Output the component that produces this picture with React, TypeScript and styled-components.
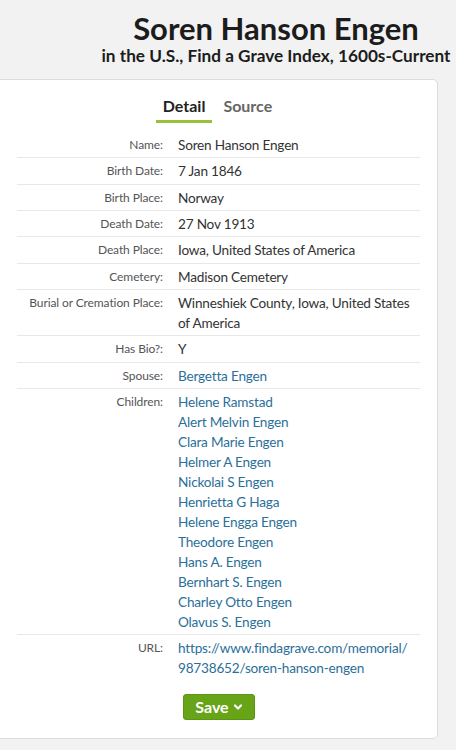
import styled, { createGlobalStyle } from "styled-components";

const GlobalStyle = createGlobalStyle`
  body{
    margin: 0;
    background: #f2f2f2;
    font-family: Lato, "Liberation Sans", sans-serif;
    color: #333;
  }
`
const Header = styled.header`
  padding: 11px 0 0 96px;
  text-align: center;
  > h1{
    margin: 0;
    font-size: 31px;
    line-height: 34px;
    font-weight: 700;
    color: #1c1c1c;
  }
  > h2{
    margin: 2px 0 0;
    font-size: 17.2px;
    line-height: 18px;
    font-weight: 700;
    color: #1c1c1c;
  }
`
const Card = styled.section`
  box-sizing: border-box;
  margin: 14px 0 0 -6px;
  width: 444px;
  background: white;
  border: 1px solid #dcdcdc;
  border-radius: 5px;
  padding: 0 17px 18px 22px;
`
const Tabs = styled.ul`
  list-style: none;
  margin: 0 0 9px;
  padding: 0;
  display: flex;
  justify-content: center;
  padding-right: 2px;
`
const Tab = styled.li<{ $active?: boolean }>`
  padding: 16px 7px 4px;
  margin: 0 2px;
  font-size: 16px;
  line-height: 20px;
  font-weight: 700;
  color: ${p => p.$active ? "#222" : "#666"};
  border-bottom: 3px solid ${p => p.$active ? "#97c13a" : "transparent"};
`
const Row = styled.div<{ $last?: boolean }>`
  display: grid;
  grid-template-columns: 146px 1fr;
  column-gap: 15px;
  padding: 3px 0 2.33px;
  border-bottom: ${p => p.$last ? "none" : "1px solid #e8e8e8"};
`
const Label = styled.div`
  text-align: right;
  font-size: 12px;
  line-height: 20px;
  color: #555;
  letter-spacing: -0.1px;
`
const Value = styled.div`
  font-size: 13.6px;
  line-height: 20px;
  color: #333;
  letter-spacing: -0.2px;
`
const Link = styled.a`
  display: block;
  color: #2b6f99;
  text-decoration: none;
`
const SaveButton = styled.button`
  margin: 13px 0 0 166px;
  width: 72px;
  height: 26px;
  background: #67a418;
  border: 1px solid #5c9414;
  border-radius: 3px;
  color: white;
  font-family: inherit;
  font-size: 16px;
  font-weight: 700;
  display: flex;
  align-items: center;
  justify-content: center;
  gap: 4px;
  padding: 0;
  > svg{
    width: 10px;
    height: 10px;
  }
`

const facts: [string, string][] = [
  ["Name:", "Soren Hanson Engen"],
  ["Birth Date:", "7 Jan 1846"],
  ["Birth Place:", "Norway"],
  ["Death Date:", "27 Nov 1913"],
  ["Death Place:", "Iowa, United States of America"],
  ["Cemetery:", "Madison Cemetery"],
  ["Burial or Cremation Place:", "Winneshiek County, Iowa, United States of America"],
  ["Has Bio?:", "Y"],
]

const children = [
  "Helene Ramstad",
  "Alert Melvin Engen",
  "Clara Marie Engen",
  "Helmer A Engen",
  "Nickolai S Engen",
  "Henrietta G Haga",
  "Helene Engga Engen",
  "Theodore Engen",
  "Hans A. Engen",
  "Bernhart S. Engen",
  "Charley Otto Engen",
  "Olavus S. Engen",
]

function App() {
  return (
    <>
      <GlobalStyle />
      <Header>
        <h1>Soren Hanson Engen</h1>
        <h2>in the U.S., Find a Grave Index, 1600s-Current</h2>
      </Header>
      <Card>
        <Tabs>
          <Tab $active>Detail</Tab>
          <Tab>Source</Tab>
        </Tabs>
        {facts.map(([k, v]) => (
          <Row key={k}>
            <Label>{k}</Label>
            <Value>{v}</Value>
          </Row>
        ))}
        <Row>
          <Label>Spouse:</Label>
          <Value><Link href="#">Bergetta Engen</Link></Value>
        </Row>
        <Row>
          <Label>Children:</Label>
          <Value>
            {children.map(c => <Link key={c} href="#">{c}</Link>)}
          </Value>
        </Row>
        <Row $last>
          <Label>URL:</Label>
          <Value>
            <Link href="#">https://www.findagrave.com/memorial/<wbr />98738652/soren-hanson-engen</Link>
          </Value>
        </Row>
        <SaveButton>
          Save
          <svg viewBox="0 0 10 10" fill="none" stroke="white" strokeWidth="2.2" strokeLinecap="round" strokeLinejoin="round">
            <path d="M2 3.5 L5 6.5 L8 3.5" />
          </svg>
        </SaveButton>
      </Card>
    </>
  )
}
export default App;
